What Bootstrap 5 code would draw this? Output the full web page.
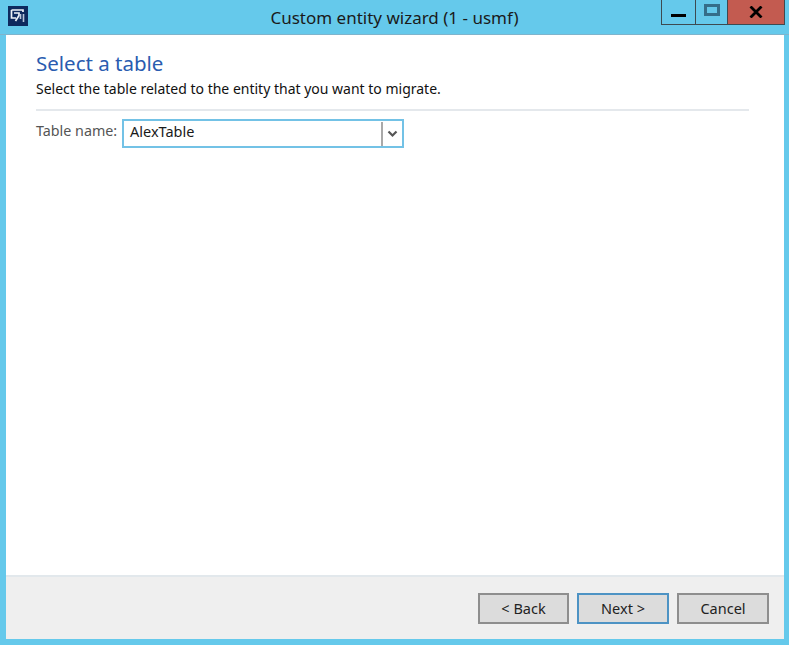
<!DOCTYPE html>
<html lang="en">
<head>
<meta charset="utf-8">
<title>Custom entity wizard</title>
<link href="https://cdn.jsdelivr.net/npm/bootstrap@5.3.0/dist/css/bootstrap.min.css" rel="stylesheet">
<style>
html,body{height:100%;margin:0}
body{background:#65c9eb;font-family:"Noto Sans","Open Sans",sans-serif;overflow:hidden}
.win{width:789px;height:645px;padding:0 5px 6px 6px}
.titlebar{height:35px;margin:0 -5px 0 -6px;position:relative;border-bottom:1px solid #7fb4cc}
.apptitle{font-size:17px;line-height:22px;padding-top:7px;text-align:center;color:#1a1a1a}
.appicon{position:absolute;left:8px;top:6px;width:20px;height:20px;display:block}
.winctl{position:absolute;left:661px;top:0;height:25px;width:124px;border:1px solid #3d4a50;border-top:0}
.wbtn{height:24px;display:flex;align-items:center;justify-content:center}
.wmin{width:34px;border-right:1px solid #3d4a50}
.wmax{width:32px;border-right:1px solid #3d4a50}
.wmaxicon{margin-top:-4px}
.wclose{flex:1;background:#c35b50}
.pane{height:604px;background:#fff}
.content{padding:15px 35px 0 30px}
.heading{font-size:20.500px;line-height:26px;color:#2a5cb0;margin:0 0 3px;font-weight:400}
.subhead{font-size:14px;line-height:20px;color:#111;margin:0 0 10px;font-weight:400}
.rule{height:2px;background:#e4e8ec;margin:0 0 8px}
.fieldlabel{font-size:14.300px;color:#555;margin:0;width:86px;white-space:nowrap;line-height:20px;padding-bottom:6px;height:26px}
.combo{width:282px;height:29px;border:2px solid #73c2e6;display:flex;align-items:center;background:#fff}
.comboval{flex:1;font-size:14.500px;color:#1a1a1a;padding-left:6px;line-height:20px;padding-bottom:6px;height:26px}
.combosep{width:2px;height:24px;background:#a9a9a9}
.comboarrow{width:19px;display:flex;justify-content:center;align-items:center}
.foot{height:64px;background:#efefef;border-top:2px solid #e2e8ec;padding:16px 15px 0 0;gap:8px}
.wizbtn{width:91px;height:31px;background:#dcdcdc;border:2px solid #8e8e8e;border-radius:0;font-size:14.500px;line-height:20px;color:#222;padding:0 0 2px}
.wizbtn:hover{background:#dcdcdc;border-color:#8e8e8e}
.wizprimary,.wizprimary:hover{border-color:#4d93c4;width:92px}
.wizlast{width:92px}
</style>
</head>
<body>
<div class="win d-flex flex-column">
  <div class="titlebar flex-shrink-0">
    <svg class="appicon" viewBox="0 0 20 20" aria-hidden="true"><rect width="20" height="20" fill="#0e2a5e"/><path d="M3.500 4H15V6M3.500 4V12H8M6 7H11V9.500L7.500 15" fill="none" stroke="#eef2f8" stroke-width="1.700"/><path d="M12.500 8V13M15.500 8V16" fill="none" stroke="#b9c6da" stroke-width="1.600"/></svg>
    <div class="apptitle">Custom entity wizard (1 - usmf)</div>
    <div class="winctl d-flex">
      <div class="wbtn wmin"><svg width="16" height="4" viewBox="0 0 16 4" class="mt-2"><rect width="15" height="3" fill="#000"/></svg></div>
      <div class="wbtn wmax"><svg width="16" height="13" viewBox="0 0 16 13" class="wmaxicon"><rect x="1.500" y="1.500" width="13" height="9" fill="none" stroke="#356e8a" stroke-width="3"/></svg></div>
      <div class="wbtn wclose"><svg width="14" height="12" viewBox="0 0 14 12"><path d="M1.500 0.500L12.500 11.500M12.500 0.500L1.500 11.500" stroke="#000" stroke-width="2.800"/></svg></div>
    </div>
  </div>
  <div class="pane d-flex flex-column">
    <div class="content flex-grow-1">
      <h1 class="heading">Select a table</h1>
      <p class="subhead">Select the table related to the entity that you want to migrate.</p>
      <div class="rule"></div>
      <div class="d-flex align-items-center">
        <label class="fieldlabel">Table name:</label>
        <div class="combo">
          <div class="comboval">AlexTable</div>
          <div class="combosep"></div>
          <div class="comboarrow"><svg width="11" height="8" viewBox="0 0 11 8"><path d="M1.500 1.500L5.500 5.500L9.500 1.500" fill="none" stroke="#555" stroke-width="2.200"/></svg></div>
        </div>
      </div>
    </div>
    <div class="foot d-flex justify-content-end align-items-start flex-shrink-0">
      <button type="button" class="btn wizbtn">&lt; Back</button>
      <button type="button" class="btn wizbtn wizprimary">Next &gt;</button>
      <button type="button" class="btn wizbtn wizlast">Cancel</button>
    </div>
  </div>
</div>
</body>
</html>
